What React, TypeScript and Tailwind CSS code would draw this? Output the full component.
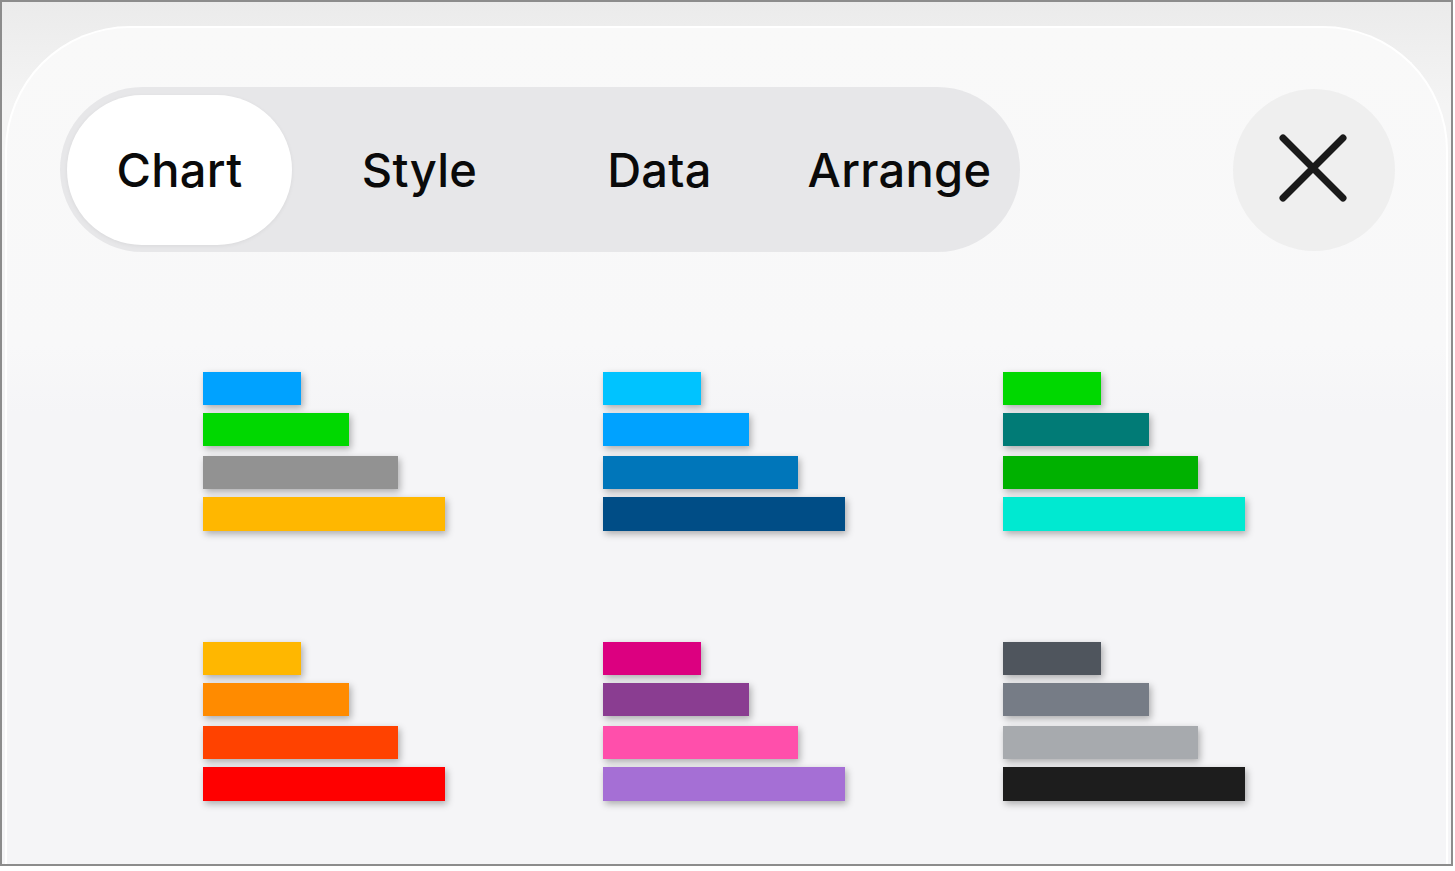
import React from "react";

const palettes: string[][] = [
  ["#00a2ff", "#00d800", "#929292", "#ffb700"],
  ["#00c3ff", "#00a2ff", "#0076ba", "#004d86"],
  ["#00d800", "#017b76", "#00b100", "#00e9d1"],
  ["#ffb700", "#ff8b00", "#ff4200", "#ff0000"],
  ["#dc0080", "#8a3d91", "#ff4fab", "#a56fd5"],
  ["#4f555d", "#767c86", "#a7aaae", "#1d1d1d"],
];

function Swatch({ colors }: { colors: string[] }) {
  return (
    <div className="flex flex-col items-start">
      <div className="h-[33px] w-[98px] shadow-[2px_3px_7px_rgba(0,0,0,0.3)]" style={{ background: colors[0] }} />
      <div className="mt-[8px] h-[33px] w-[146px] shadow-[2px_3px_7px_rgba(0,0,0,0.3)]" style={{ background: colors[1] }} />
      <div className="mt-[10px] h-[33px] w-[195px] shadow-[2px_3px_7px_rgba(0,0,0,0.3)]" style={{ background: colors[2] }} />
      <div className="mt-[8px] h-[34px] w-[242px] shadow-[2px_3px_7px_rgba(0,0,0,0.3)]" style={{ background: colors[3] }} />
    </div>
  );
}

export default function App() {
  const tabs = ["Chart", "Style", "Data", "Arrange"];
  return (
    <div className="w-[1455px] h-[871px] bg-white">
      <div className="w-[1453px] h-[866px] border-2 border-[#8c8c8c] flex flex-col bg-[linear-gradient(180deg,#ebebeb_0%,#f4f4f4_12%,#f5f5f7_100%)]">
        <div className="mt-[24px] mx-[3px] flex-1 rounded-t-[125px] border-t-2 border-x-2 border-white bg-[linear-gradient(180deg,#f9f9f9_0%,#f8f8f9_38%,#f5f5f7_46%,#f5f5f7_100%)] flex flex-col">
          <div className="pt-[59px] pl-[53px] pr-[51px] flex items-center justify-between">
            <div className="w-[960px] h-[165px] rounded-full bg-[#e7e7e9] grid grid-cols-4">
              {tabs.map((t, i) => (
                <div key={t} className="p-[7px] pr-[8px] pt-[8px] flex">
                  <div
                    className={
                      "flex-1 rounded-full flex items-center justify-center text-[47px] font-medium text-[#0a0a0a] tracking-[0.3px] " +
                      (i === 0 ? "bg-white shadow-[0_1px_4px_rgba(0,0,0,0.06)]" : "")
                    }
                    style={{ fontFamily: "Inter, 'Noto Sans', sans-serif" }}
                  >
                    {t}
                  </div>
                </div>
              ))}
            </div>
            <div className="w-[162px] h-[162px] rounded-full bg-[#efefef] flex items-center justify-center">
              <svg width="68" height="68" viewBox="0 0 68 68" className="-mt-[3px] -ml-[2px]">
                <path d="M4 4 L64 64 M64 4 L4 64" stroke="#1a1a1a" strokeWidth="7" strokeLinecap="round" />
              </svg>
            </div>
          </div>
          <div className="mt-[120px] pl-[196px] grid grid-cols-[400px_400px_400px] gap-y-[111px]">
            {palettes.map((p, i) => (
              <Swatch key={i} colors={p} />
            ))}
          </div>
        </div>
      </div>
    </div>
  );
}
